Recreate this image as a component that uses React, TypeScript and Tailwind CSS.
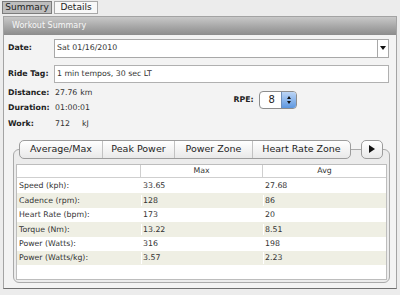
import React from 'react';

const rows = [
  ['Speed (kph):', '33.65', '27.68'],
  ['Cadence (rpm):', '128', '86'],
  ['Heart Rate (bpm):', '173', '20'],
  ['Torque (Nm):', '13.22', '8.51'],
  ['Power (Watts):', '316', '198'],
  ['Power (Watts/kg):', '3.57', '2.23'],
];

const tabs = [
  { label: 'Average/Max', w: 'w-[82px]' },
  { label: 'Peak Power', w: 'w-[72px]' },
  { label: 'Power Zone', w: 'w-[78px]' },
  { label: 'Heart Rate Zone', w: 'w-[98px]' },
];

const App: React.FC = () => {
  return (
    <div className="w-[400px] h-[295px] overflow-hidden bg-[#ececec] font-['DejaVu_Sans',sans-serif] text-[#333]">
      {/* top tabs */}
      <div className="h-[16px] flex items-start gap-[2px] pl-[2px] pt-[1px]">
        <div className="w-[50px] h-[13px] border border-[#7c7c7c] bg-[#bdbdbd] text-[9px] leading-[11px] text-center text-[#222]">
          Summary
        </div>
        <div className="w-[44px] h-[13px] border border-[#a8a8a8] bg-[#f8f8f8] text-[9px] leading-[11px] text-center text-[#222]">
          Details
        </div>
      </div>

      {/* panel */}
      <div className="ml-[3px] w-[394px] h-[273px] border border-[#a3a3a3] border-b-[#6f6f6f] bg-[#f3f3f3] flex flex-col">
        <div className="h-[18px] bg-gradient-to-b from-[#c8c8c8] to-[#8c8c8c] text-[#f7f7f7] text-[8px] pl-[8px] flex items-center">
          Workout Summary
        </div>

        <div className="pl-[4px] pr-[7px] pt-[3px] flex flex-col text-[7.8px]">
          {/* date */}
          <div className="flex items-center h-[20px]">
            <span className="w-[46px] font-bold text-[#222]">Date:</span>
            <div className="flex-1 h-[19px] border border-[#a8a8a8] bg-white flex items-center">
              <span className="flex-1 pl-[2px]">Sat 01/16/2010</span>
              <div className="w-[11px] h-full border-l border-[#a8a8a8] flex items-center justify-center">
                <svg width="6" height="4" viewBox="0 0 6 4">
                  <path d="M0 0 L6 0 L3 4 Z" fill="#111" />
                </svg>
              </div>
            </div>
          </div>

          {/* ride tag */}
          <div className="flex items-center h-[19px] mt-[6px]">
            <span className="w-[46px] font-bold text-[#222]">Ride Tag:</span>
            <div className="flex-1 h-[18px] border border-[#b0b0b0] bg-white flex items-center pl-[2px]">
              1 min tempos, 30 sec LT
            </div>
          </div>

          {/* distance / duration / rpe */}
          <div className="flex items-center mt-[2px]">
            <div className="flex flex-col">
              <div className="flex items-center h-[15px]">
                <span className="w-[47px] font-bold text-[#222]">Distance:</span>
                <span>27.76</span>
                <span className="ml-[3px]">km</span>
              </div>
              <div className="flex items-center h-[15px]">
                <span className="w-[47px] font-bold text-[#222]">Duration:</span>
                <span>01:00:01</span>
              </div>
            </div>
            <div className="ml-[141px] flex items-center">
              <span className="font-bold text-[#222] w-[26px]">RPE:</span>
              <div className="w-[38px] h-[18px] border border-[#8d8d8d] rounded-[4px] bg-white flex overflow-hidden">
                <span className="flex-1 pl-[8px] text-[10px] leading-[16px] text-[#222]">8</span>
                <div className="w-[15px] h-full bg-gradient-to-b from-[#bcd5f5] to-[#5d97df] border-l border-[#6f8fba] flex flex-col items-center justify-center gap-[2px]">
                  <svg width="4" height="3" viewBox="0 0 4 3">
                    <path d="M0 3 L4 3 L2 0 Z" fill="#111" />
                  </svg>
                  <svg width="4" height="3" viewBox="0 0 4 3">
                    <path d="M0 0 L4 0 L2 3 Z" fill="#111" />
                  </svg>
                </div>
              </div>
            </div>
          </div>

          {/* work */}
          <div className="flex items-center h-[16px] mt-[1px]">
            <span className="w-[47px] font-bold text-[#222]">Work:</span>
            <span>712</span>
            <span className="ml-[12px]">kJ</span>
          </div>

          {/* tab widget */}
          <div className="mt-[7px] ml-[5px] w-[377px] flex flex-col">
            <div className="flex items-center ml-[6px] h-[20px] relative z-10">
              <div className="flex h-[19px] border border-[#9c9c9c] rounded-[5px] overflow-hidden bg-gradient-to-b from-white to-[#e9e9e9]">
                {tabs.map((t, i) => (
                  <div
                    key={t.label}
                    className={`${t.w} h-full flex items-center justify-center text-[9.5px] text-[#1e1e1e] ${i > 0 ? 'border-l border-[#c2c2c2]' : ''}`}
                  >
                    {t.label}
                  </div>
                ))}
              </div>
              <div className="ml-[10px] w-[22px] h-[19px] border border-[#9c9c9c] rounded-[5px] bg-gradient-to-b from-white to-[#e9e9e9] flex items-center justify-center">
                <svg width="6" height="8" viewBox="0 0 6 8">
                  <path d="M0 0 L6 4 L0 8 Z" fill="#111" />
                </svg>
              </div>
            </div>
            <div className="-mt-[10px] h-[134px] border border-[#aaaaaa] rounded-[6px] bg-[#ececec] pt-[14px] px-[2px] pb-[2px]">
              <div className="h-full border border-[#bdbdbd] bg-white text-[7.8px]">
                <div className="flex h-[13px] border-b border-[#cfcfcf]">
                  <div className="w-[124px] border-r border-[#cfcfcf]" />
                  <div className="w-[122px] border-r border-[#cfcfcf] flex items-center justify-center">Max</div>
                  <div className="flex-1 flex items-center justify-center">Avg</div>
                </div>
                <div className="pt-[1px]">
                  {rows.map((r, i) => (
                    <div
                      key={r[0]}
                      className={`flex h-[14.4px] items-center ${i % 2 === 1 ? 'bg-[#efefe4]' : 'bg-white'}`}
                    >
                      <span className="w-[124px] pl-[2px]">{r[0]}</span>
                      <span className="w-[122px] pl-[1px] border-l border-white">{r[1]}</span>
                      <span className="flex-1 pl-[1px] border-l border-white">{r[2]}</span>
                    </div>
                  ))}
                </div>
              </div>
            </div>
          </div>
        </div>
      </div>
    </div>
  );
};

export default App;
